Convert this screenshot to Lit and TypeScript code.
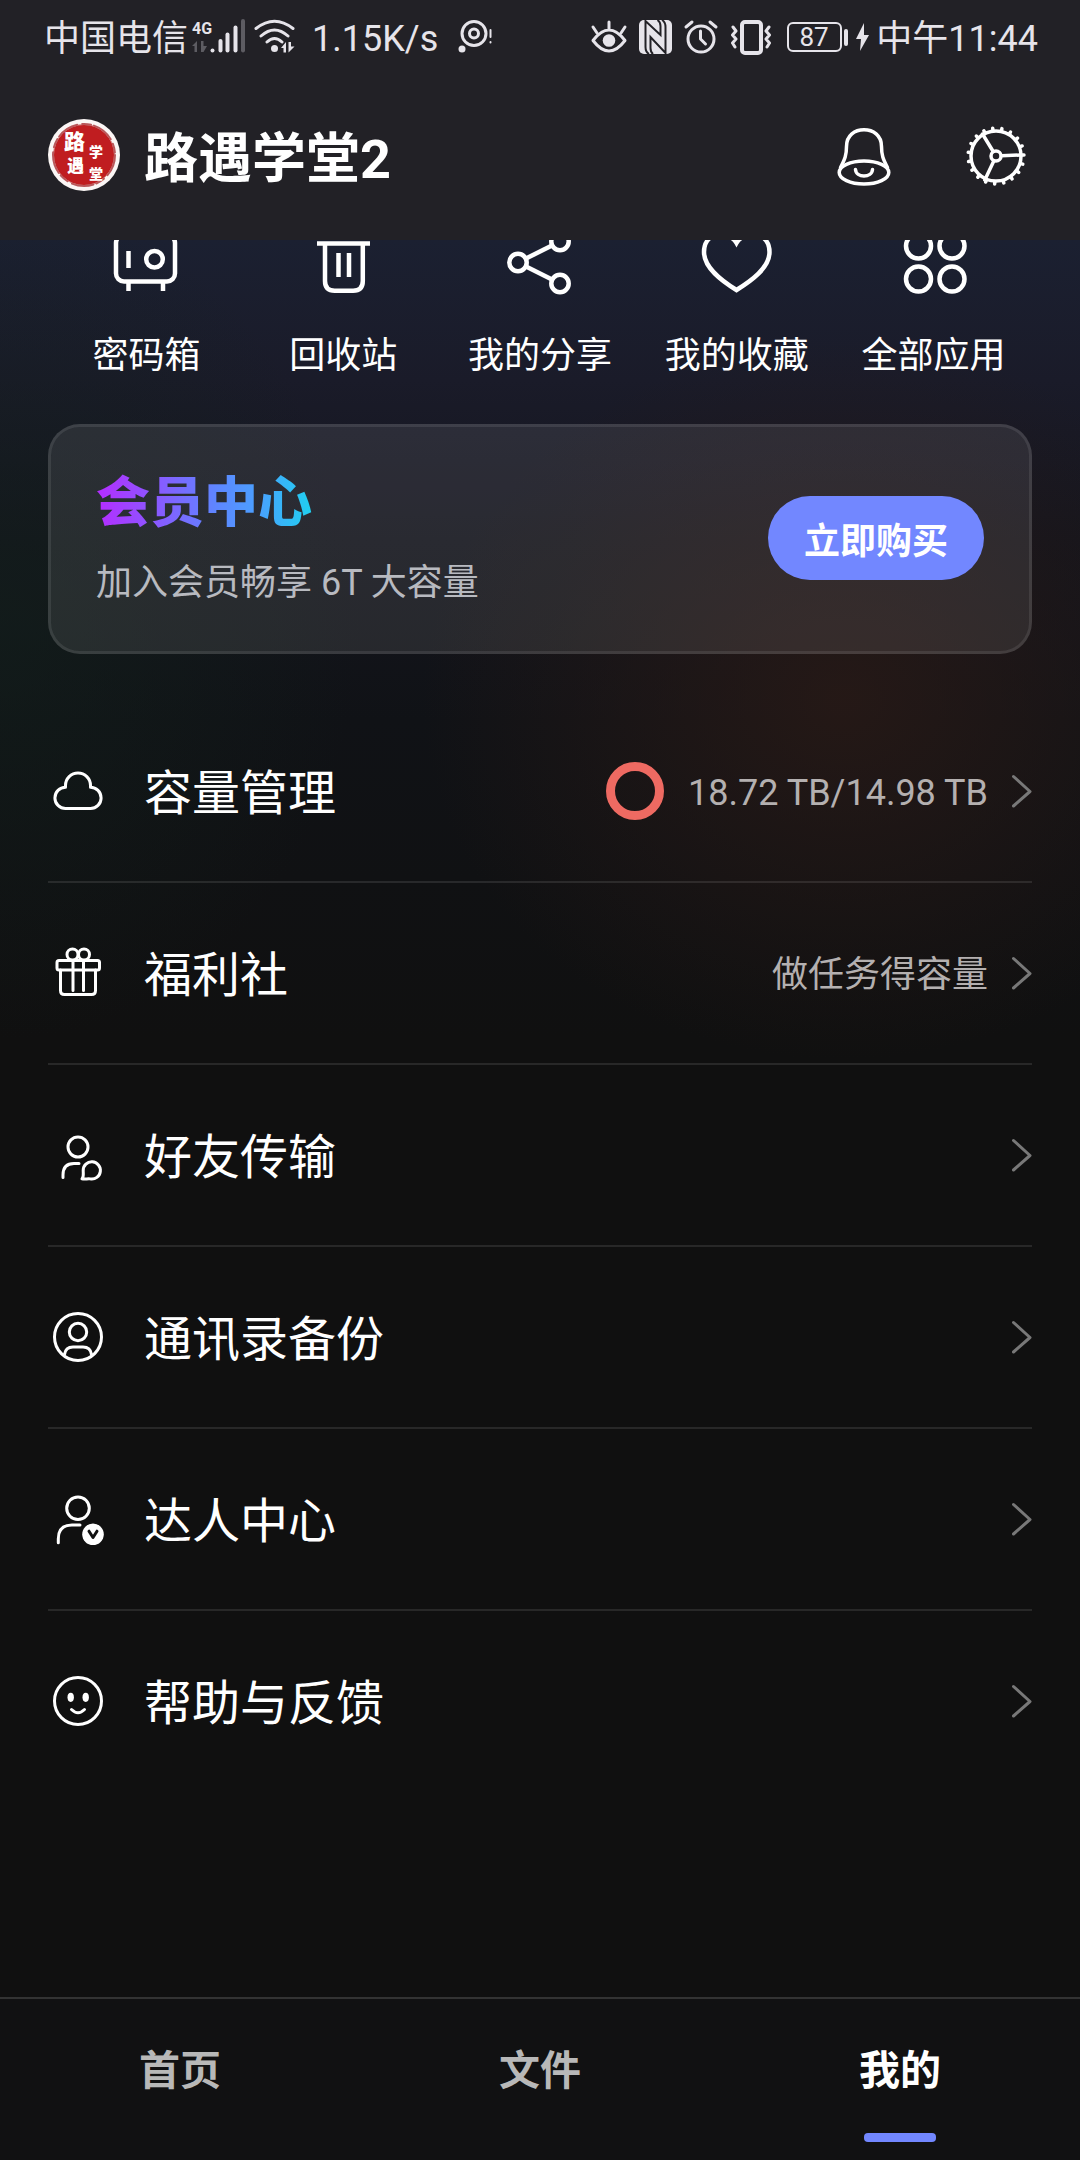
import { LitElement, html, svg, css } from "lit";
import { customElement } from "lit/decorators.js";
import { classMap } from "lit/directives/class-map.js";

const shortcuts = [
  {
    label: "密码箱",
    icon: svg`<rect x="6" y="9" width="59" height="46.500" rx="8"/><path d="M18.500 55v10M53 55v10M18.500 25v17"/><circle cx="44.500" cy="33.300" r="8.300"/>`,
  },
  {
    label: "回收站",
    icon: svg`<path d="M10 17.500h53M18 18v37q0 9.700 9.700 9.700h18.400q9.700 0 9.700-9.700V18M31.500 27v24M42 27v24"/>`,
  },
  {
    label: "我的分享",
    icon: svg`<circle cx="14" cy="36.500" r="8.700"/><circle cx="56" cy="15.500" r="8.700"/><circle cx="56" cy="57.500" r="8.700"/><path d="M22 32.500l26-13M22 40.500l26 13"/>`,
  },
  {
    label: "我的收藏",
    icon: svg`<path d="M35.500 17C28 4 3 5 3 26c0 16 18 29 32.500 38C50 55 68.500 42 68.500 26 68.500 5 43 4 35.500 17z"/>`,
  },
  {
    label: "全部应用",
    icon: svg`<circle cx="20.500" cy="20" r="12.500"/><circle cx="54" cy="20" r="12.500"/><circle cx="20.500" cy="53" r="12.500"/><circle cx="54" cy="53" r="12.500"/>`,
  },
];

const rows = [
  {
    label: "容量管理",
    note: "18.72 TB/14.98 TB",
    ring: true,
    icon: svg`<path d="M17.500 47.500a10.600 10.600 0 0 1 0-21.200V24.500a12.500 12.500 0 0 1 25 0v1.800a10.600 10.600 0 0 1 0 21.200z"/>`,
  },
  {
    label: "福利社",
    note: "做任务得容量",
    ring: false,
    icon: svg`<rect x="9" y="17.500" width="42.500" height="9.500" rx="2"/><path d="M12.500 27v20.500q0 4 4 4h27q4 0 4-4V27M25 18v29.500M35.500 18v29.500"/><circle cx="24.500" cy="11.500" r="5.500"/><circle cx="36" cy="11.500" r="5.500"/>`,
  },
  {
    label: "好友传输",
    note: "",
    ring: false,
    icon: svg`<circle cx="30" cy="22" r="10"/><path d="M15 52.500V50q0-11.500 11-11.500h5"/><path d="M34 53.800c2-2 1.200-4.500 1.200-8.300a8.600 8.600 0 1 1 7 8.400c-2.700-.6-5 .8-8.200-.1z"/>`,
  },
  {
    label: "通讯录备份",
    note: "",
    ring: false,
    icon: svg`<circle cx="30" cy="30" r="23.500"/><circle cx="30" cy="25" r="8.700"/><path d="M16.500 47.500Q17.500 40 25 40h10q7.500 0 8.500 7.500"/>`,
  },
  {
    label: "达人中心",
    note: "",
    ring: false,
    icon: svg`<circle cx="30" cy="19.200" r="11.300"/><path d="M10.300 53.700V50Q10.300 36 24 36h8"/><circle class="solid" cx="45" cy="45.300" r="10.800"/><path class="cut" d="M41 42.200l4 6.300 4-6.300"/>`,
  },
  {
    label: "帮助与反馈",
    note: "",
    ring: false,
    icon: svg`<circle cx="30" cy="30" r="23.500"/><ellipse class="solid" cx="22.700" cy="26.300" rx="3.200" ry="4.600"/><ellipse class="solid" cx="37.700" cy="26.300" rx="3.200" ry="4.600"/><path d="M23.500 38.500q6.500 6.500 13 0"/>`,
  },
];

const tabs = ["首页", "文件", "我的"];
const activeTab = "我的";
const gearTeeth = Array.from({ length: 19 }, (_, i) => (i * 360) / 19 - 2);

@customElement("status-bar")
export class StatusBar extends LitElement {
  static styles = css`
    :host {
      display: flex;
      justify-content: space-between;
      align-items: center;
      height: 74px;
      padding: 0 42px 0 44px;
      font-size: 36px;
      line-height: 44px;
      color: #e6e4ea;
    }
    .group {
      display: flex;
      align-items: center;
      gap: 12px;
      white-space: nowrap;
    }
    .left {
      gap: 8px;
    }
    .carrier {
      display: flex;
      align-items: center;
      gap: 4px;
    }
    .text {
      padding-top: 4px;
    }
    .speed {
      padding-left: 8px;
      padding-right: 12px;
    }
    svg {
      display: block;
      flex: none;
      overflow: visible;
      fill: none;
      stroke: currentColor;
      stroke-width: 3;
      stroke-linecap: round;
      stroke-linejoin: round;
    }
    .solid {
      fill: currentColor;
      stroke: none;
    }
    .dim {
      fill: #5d5c62;
      stroke: none;
    }
    .cut {
      stroke: #222126;
      stroke-width: 3;
      stroke-linecap: butt;
      stroke-linejoin: miter;
    }
    .heavy {
      stroke-width: 4;
    }
    .thin {
      stroke-width: 2;
    }
    .network {
      font: 700 16px Roboto, sans-serif;
    }
    .level {
      font: 400 26px Roboto, sans-serif;
    }
  `;

  render() {
    return html`
      <div class="group left">
        <span class="carrier">
          <span class="text">中国电信</span>
          <svg width="54" height="36" viewBox="0 0 54 36">
            <text class="solid network" x="0" y="15">4G</text>
            <path class="dim" d="M5 22v11h-2.500v-6h-2.500zM9 22h2.500v5H15l-3.500 6H9z" />
            <rect class="solid" x="18.500" y="29.500" width="4" height="4" rx="2" />
            <rect class="solid" x="26.500" y="20" width="4" height="13.500" rx="2" />
            <rect class="solid" x="33.500" y="13.500" width="4" height="20" rx="2" />
            <rect class="solid" x="41.500" y="6.500" width="4" height="27" rx="2" />
            <rect class="dim" x="49" y="0" width="4" height="33.500" rx="2" />
          </svg>
        </span>
        <svg width="42" height="36" viewBox="0 0 42 36">
          <path d="M2 9.500Q20.500-5 39 9.500M7 17q13.500-12 27 0M13 23q7.500-7 15 0" />
          <circle class="solid" cx="20.500" cy="29.500" r="3.500" />
          <path class="solid" d="M32 23v10.500h-2.500V29H27zM34.500 23v10.500l6-6H37V23z" />
        </svg>
        <span class="text speed">1.15K/s</span>
        <svg width="36" height="36" viewBox="0 0 36 36">
          <circle cx="16" cy="14.500" r="12" />
          <circle cx="16" cy="14.500" r="4.500" />
          <circle class="solid" cx="4" cy="30" r="3.500" />
          <path class="thin" d="M32.500 11v7M32.500 23v.5" />
        </svg>
      </div>
      <div class="group">
        <svg width="36" height="36" viewBox="0 0 36 36">
          <path d="M2 21.500Q10 11 18 11t16 10.500Q26 32 18 32T2 21.500zM18 3v7M2 8l4 6M34 8l-4 6" />
          <circle class="solid" cx="18" cy="21.500" r="6.300" />
        </svg>
        <svg width="33" height="36" viewBox="0 0 33 36">
          <rect class="solid" x="0" y="1" width="33" height="34" rx="5" />
          <path class="cut thin" d="M10 35Q6.500 33 6.500 28V2L21.500 16V7Q21.500 3 18.500 1" />
          <path class="cut thin" d="M23 1Q26.500 3 26.500 8V34L11.500 18V29Q11.500 33 14 35" />
        </svg>
        <svg width="34" height="36" viewBox="0 0 34 36">
          <circle cx="17" cy="20" r="13" />
          <path d="M2 8l6-5M32 8l-6-5M16.500 12v8l5 5" />
        </svg>
        <svg width="42" height="36" viewBox="0 0 42 36">
          <rect class="heavy" x="12" y="3" width="19" height="31" rx="3" />
          <path d="M3 8l3 4-3.500 4L6 20l-3.500 4L5 28M39 8l-3 4 3.500 4-3.500 4 3.500 4-2.500 4" />
        </svg>
        <svg width="80" height="36" viewBox="-3 0 80 36">
          <rect class="thin" x="1" y="4" width="53" height="28" rx="5" />
          <rect class="solid" x="57" y="10" width="4" height="17" rx="2" />
          <text class="solid level" x="27" y="27" text-anchor="middle">87</text>
          <path class="solid" d="M77 4L69 20h5l-1 12 9-16h-5z" />
        </svg>
        <time class="text">中午11:44</time>
      </div>
    `;
  }
}

@customElement("app-root")
export class AppRoot extends LitElement {
  static styles = css`
    * {
      box-sizing: border-box;
    }
    :host {
      display: flex;
      flex-direction: column;
      min-height: 100vh;
      background: #101010;
      color: #ffffff;
      font-family: Roboto, "Noto Sans CJK SC", sans-serif;
    }
    a {
      color: inherit;
      text-decoration: none;
    }
    button {
      border: 0;
      padding: 0;
      background: none;
      color: inherit;
      font: inherit;
      cursor: pointer;
    }
    svg {
      display: block;
      flex: none;
      fill: none;
      stroke: currentColor;
      stroke-linecap: round;
      stroke-linejoin: round;
    }
    .solid {
      fill: currentColor;
      stroke: none;
    }
    .cut {
      stroke: #101010;
    }
    .top {
      background: #222126;
    }
    .profile {
      display: flex;
      align-items: center;
      gap: 24px;
      height: 166px;
      padding: 0 48px;
    }
    .avatar {
      margin-bottom: 4px;
    }
    .name {
      flex: 1;
      margin: 0;
      padding-top: 6px;
      font-size: 54px;
      line-height: 72px;
      font-weight: 700;
    }
    .actions {
      display: flex;
      gap: 60px;
    }
    .actions svg {
      stroke-width: 3.5;
    }
    .seal {
      font-family: "Noto Sans CJK SC", serif;
      font-weight: 900;
      fill: #ffffff;
      stroke: none;
    }
    .big {
      font-size: 21px;
    }
    .mid {
      font-size: 17px;
    }
    .small {
      font-size: 14px;
    }
    main {
      flex: 1;
      overflow: hidden;
      padding: 0 48px;
      background:
        radial-gradient(ellipse 420px 360px at 78% 460px, #2a1a16cc, #2a1a1600),
        radial-gradient(ellipse 360px 420px at 0 380px, #12201b99, #12201b00),
        linear-gradient(#1b2031 0, #1a1b29 140px, #14151d 300px, #101216 480px, #101010 800px);
    }
    .shortcuts {
      display: grid;
      grid-template-columns: repeat(5, 1fr);
      margin: -14px 0 48px;
    }
    .shortcut {
      display: flex;
      flex-direction: column;
      align-items: center;
      gap: 30px;
      font-family: "Noto Sans CJK SC", sans-serif;
      font-size: 36px;
      line-height: 48px;
      white-space: nowrap;
    }
    .shortcut svg {
      stroke-width: 4.5;
      stroke-linecap: butt;
      stroke-linejoin: miter;
    }
    .vip {
      display: flex;
      align-items: center;
      justify-content: space-between;
      padding: 42px 45px 44px;
      border: 3px solid #ffffff2b;
      border-radius: 32px;
      background: #ffffff17;
      background-clip: padding-box;
    }
    .pitch {
      display: flex;
      flex-direction: column;
      gap: 30px;
    }
    .brand {
      align-self: flex-start;
      margin: 0;
      font-family: "Noto Sans CJK SC", sans-serif;
      font-size: 54px;
      line-height: 60px;
      font-weight: 900;
      color: transparent;
      background: linear-gradient(90deg, #b52cff, #5f85ff 55%, #4aa0ff 75%, #1fd0f0);
      background-clip: text;
      -webkit-background-clip: text;
    }
    .offer {
      margin: 0;
      font-size: 36px;
      line-height: 48px;
      color: #b8bac0;
    }
    .buy {
      width: 216px;
      height: 84px;
      border-radius: 42px;
      background: #7287ff;
      font-family: "Noto Sans CJK SC", sans-serif;
      font-size: 36px;
      line-height: 48px;
      font-weight: 700;
    }
    .list {
      list-style: none;
      margin: 47px 0 0;
      padding: 0;
    }
    .item + .item {
      border-top: 2px solid #ffffff1a;
    }
    .row {
      display: flex;
      align-items: center;
      height: 180px;
      gap: 24px;
    }
    .row .glyph {
      stroke-width: 3;
    }
    .label {
      flex: 1;
      padding: 0 0 4px 12px;
      font-family: "Noto Sans CJK SC", sans-serif;
      font-size: 48px;
      line-height: 64px;
    }
    .note {
      padding-top: 4px;
      font-size: 36px;
      line-height: 48px;
      color: #b4b0b0;
    }
    .ring {
      stroke: #ee6a62;
      stroke-width: 9;
    }
    .chevron {
      stroke: #787878;
      stroke-width: 3;
    }
    .tabs {
      display: grid;
      grid-template-columns: repeat(3, 1fr);
      border-top: 2px solid #333333;
      background: #111112;
    }
    .tab {
      display: flex;
      flex-direction: column;
      align-items: center;
      gap: 34px;
      padding: 44px 0 18px;
      font-size: 41px;
      line-height: 56px;
      font-weight: 700;
      color: #b8b8b8;
    }
    .tab::after {
      content: "";
      width: 72px;
      height: 9px;
      border-radius: 4px;
    }
    .tab.active {
      color: #ffffff;
    }
    .tab.active::after {
      background: #7287ff;
    }
  `;

  render() {
    return html`
      <header class="top">
        <status-bar></status-bar>
        <div class="profile">
          <svg class="avatar" width="72" height="72" viewBox="0 0 72 72">
            <circle cx="36" cy="36" r="36" fill="#fbf6f5" stroke="none" />
            <circle cx="36" cy="36" r="30.500" fill="#c01d20" stroke="#d88a88" stroke-width="1" />
            <circle cx="36" cy="36" r="31" stroke="#b9575a" stroke-width="2" stroke-dasharray="22 5 9 3" />
            <text class="seal big" x="16" y="30">路</text>
            <text class="seal mid" x="19" y="53">遇</text>
            <text class="seal small" x="41" y="38">学</text>
            <text class="seal small" x="41" y="60">堂</text>
          </svg>
          <h1 class="name">路遇学堂2</h1>
          <div class="actions">
            <button aria-label="消息">
              <svg width="72" height="72" viewBox="0 0 72 72">
                <ellipse cx="36" cy="51.500" rx="24.800" ry="11.600" />
                <path d="M12.500 46.500C17 38 18.500 34 18.500 25.500 18.500 14 27 8.800 36 8.800s17.500 5.200 17.500 16.700C53.500 34 55 38 59.500 46.500M27.500 48.500c.5 8.500 16.500 8.500 17 0" />
              </svg>
            </button>
            <button aria-label="设置">
              <svg width="72" height="72" viewBox="0 0 72 72">
                <circle cx="36" cy="35" r="25" />
                <circle cx="36" cy="35" r="5" />
                <path d="M41.500 34.700l19-.7M33.200 30.500L22.500 13M33.800 40l-9 19" />
                ${gearTeeth.map((a) => svg`<path d="M62 35h2" transform="rotate(${a} 36 35)"/>`)}
              </svg>
            </button>
          </div>
        </div>
      </header>
      <main>
        <nav class="shortcuts">
          ${shortcuts.map(
            (s) => html`
              <a class="shortcut" href="#">
                <svg width="72" height="72" viewBox="0 0 72 72">${s.icon}</svg>
                <span>${s.label}</span>
              </a>
            `,
          )}
        </nav>
        <section class="vip">
          <div class="pitch">
            <h2 class="brand">会员中心</h2>
            <p class="offer">加入会员畅享 6T 大容量</p>
          </div>
          <button class="buy">立即购买</button>
        </section>
        <ul class="list">
          ${rows.map(
            (r) => html`
              <li class="item">
                <a class="row" href="#">
                  <svg class="glyph" width="60" height="60" viewBox="0 0 60 60">${r.icon}</svg>
                  <span class="label">${r.label}</span>
                  ${r.ring
                    ? html`<svg class="ring" width="58" height="58" viewBox="0 0 58 58">
                        <circle cx="29" cy="29" r="24.500" />
                      </svg>`
                    : ""}
                  ${r.note ? html`<span class="note">${r.note}</span>` : ""}
                  <svg class="chevron" width="20" height="36" viewBox="0 0 20 36">
                    <path d="M1.500 3.500L18 18.500 1.500 33" />
                  </svg>
                </a>
              </li>
            `,
          )}
        </ul>
      </main>
      <nav class="tabs">
        ${tabs.map(
          (t) => html`<a class=${classMap({ tab: true, active: t === activeTab })} href="#">${t}</a>`,
        )}
      </nav>
    `;
  }
}
